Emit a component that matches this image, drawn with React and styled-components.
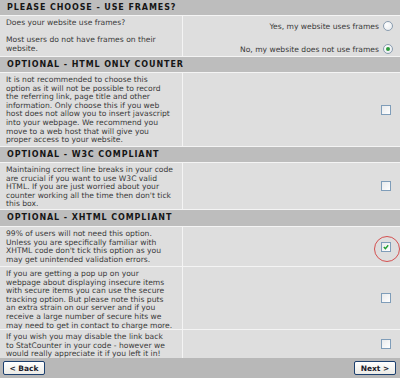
import styled, { createGlobalStyle } from "styled-components";

const GlobalStyle = createGlobalStyle`
  html, body { margin: 0; padding: 0; background: #dedede; }
  body { width: 400px; height: 378px; overflow: hidden; font-family: "DejaVu Sans", Verdana, sans-serif; }
`;

const Table = styled.div`
  display: grid;
  grid-template-columns: 182px 1fr;
  gap: 1px;
  background: #f4f4f4;
  width: 400px;
`;

const Header = styled.div`
  grid-column: 1 / 3;
  background: #bdbdbd;
  color: #161616;
  font-weight: bold;
  font-size: 8px;
  letter-spacing: 0.9px;
  text-transform: uppercase;
  height: ${(p) => p.h || 15}px;
  line-height: ${(p) => p.h || 15}px;
  padding-left: 7px;
  white-space: nowrap;
`;

const Text = styled.div`
  background: #dedede;
  color: #3a3a3a;
  font-size: 7.6px;
  line-height: 8.6px;
  padding: ${(p) => p.pad || "3px 0 3px 6px"};
  height: ${(p) => p.h}px;
  box-sizing: border-box;
  white-space: nowrap;
`;

const Side = styled.div`
  background: #dedede;
  display: flex;
  flex-direction: column;
  align-items: flex-end;
  justify-content: ${(p) => p.justify || "center"};
  padding: ${(p) => p.pad || "0 9px 0 0"};
  position: relative;
  gap: ${(p) => p.gap || 0}px;
`;

const Choice = styled.div`
  display: flex;
  align-items: center;
  gap: 4px;
  font-size: 7.6px;
  color: #3a3a3a;
  line-height: 9px;
`;

const Radio = styled.span`
  width: 8px;
  height: 8px;
  border-radius: 50%;
  border: 1px solid #8a9db0;
  background: radial-gradient(circle at 35% 35%, #ffffff, #e4e8ec);
  display: flex;
  align-items: center;
  justify-content: center;
  &::after {
    content: "";
    width: 4px;
    height: 4px;
    border-radius: 50%;
    background: ${(p) => (p.on ? "#2e9b3b" : "transparent")};
  }
`;

const Box = styled.span`
  width: 8px;
  height: 8px;
  border: 1px solid #7f9db9;
  background: linear-gradient(135deg, #e8eaec, #ffffff);
  display: flex;
  align-items: center;
  justify-content: center;
`;

const Ring = styled.span`
  position: absolute;
  right: 0px;
  top: 50%;
  width: 24px;
  height: 24px;
  margin-top: -11px;
  border: 1px solid #d45050;
  border-radius: 50%;
`;

const Footer = styled.div`
  background: #b8b8b8;
  height: 20px;
  display: flex;
  align-items: center;
  justify-content: space-between;
  padding: 0 4px 0 3px;
`;

const Button = styled.button`
  width: 42px;
  height: 14px;
  padding: 0;
  margin: 0;
  font-family: "DejaVu Sans", Verdana, sans-serif;
  font-weight: bold;
  font-size: 7.5px;
  color: #1a1a2a;
  background: linear-gradient(#ffffff, #ecebe6);
  border: 1px solid #1c3f6e;
  border-radius: 2px;
`;

const Lines = ({ lines }) =>
  lines.map((l, i) => (
    <span key={i}>
      {l}
      <br />
    </span>
  ));

const Check = ({ on }) => (
  <Box>
    {on && (
      <svg width="6" height="6" viewBox="0 0 6 6">
        <path d="M0.8 3 L2.4 4.6 L5.2 1.2" stroke="#21a030" strokeWidth="1.4" fill="none" />
      </svg>
    )}
  </Box>
);

const App = () => {
  return (
    <>
      <GlobalStyle />
      <Table>
        <Header>Please choose - use frames?</Header>
        <Text h={40}>
          <Lines lines={["Does your website use frames?", "", "Most users do not have frames on their", "website."]} />
        </Text>
        <Side justify="flex-start" pad="5px 7px 0 0" gap={13}>
          <Choice>Yes, my website uses frames <Radio /></Choice>
          <Choice>No, my website does not use frames <Radio on /></Choice>
        </Side>

        <Header>Optional - HTML only counter</Header>
        <Text h={73}>
          <Lines
            lines={[
              "It is not recommended to choose this",
              "option as it will not be possible to record",
              "the referring link, page title and other",
              "information. Only choose this if you web",
              "host does not allow you to insert javascript",
              "into your webpage. We recommend you",
              "move to a web host that will give you",
              "proper access to your website.",
            ]}
          />
        </Text>
        <Side><Check /></Side>

        <Header>Optional - W3C compliant</Header>
        <Text h={46}>
          <Lines
            lines={[
              "Maintaining correct line breaks in your code",
              "are crucial if you want to use W3C valid",
              "HTML. If you are just worried about your",
              "counter working all the time then don't tick",
              "this box.",
            ]}
          />
        </Text>
        <Side><Check /></Side>

        <Header h={16}>Optional - XHTML compliant</Header>
        <Text h={39}>
          <Lines
            lines={[
              "99% of users will not need this option.",
              "Unless you are specifically familiar with",
              "XHTML code don't tick this option as you",
              "may get unintended validation errors.",
            ]}
          />
        </Text>
        <Side>
          <Check on />
          <Ring />
        </Side>

        <Text h={62}>
          <Lines
            lines={[
              "If you are getting a pop up on your",
              "webpage about displaying insecure items",
              "with secure items you can use the secure",
              "tracking option. But please note this puts",
              "an extra strain on our server and if you",
              "receive a large number of secure hits we",
              "may need to get in contact to charge more.",
            ]}
          />
        </Text>
        <Side><Check /></Side>

        <Text h={28}>
          <Lines
            lines={[
              "If you wish you may disable the link back",
              "to StatCounter in your code - however we",
              "would really appreciate it if you left it in!",
            ]}
          />
        </Text>
        <Side><Check /></Side>
      </Table>
      <Footer>
        <Button>&lt; Back</Button>
        <Button>Next &gt;</Button>
      </Footer>
    </>
  );
};

export default App;
